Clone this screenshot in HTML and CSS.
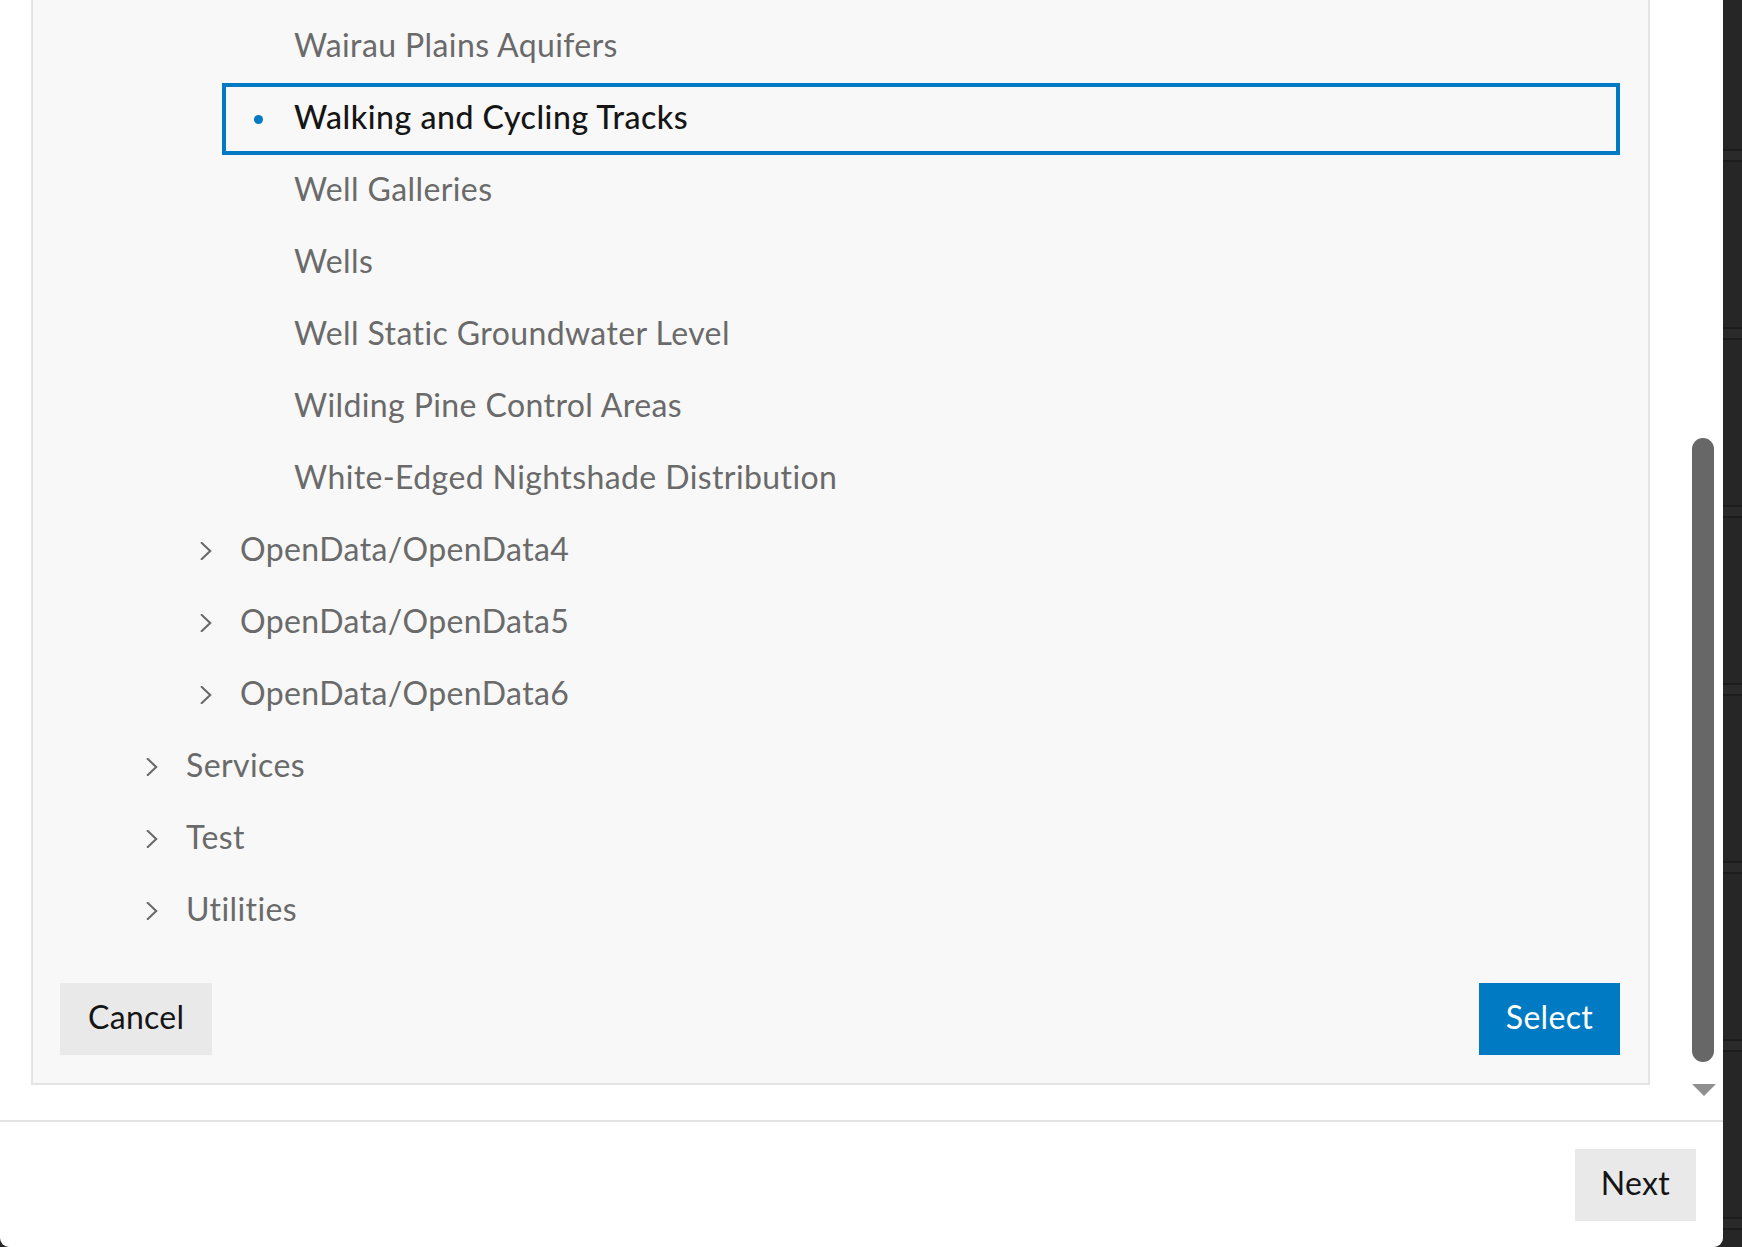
FILE: index.html
```html
<!DOCTYPE html>
<html lang="en">
<head>
<meta charset="utf-8">
<title>Select layer</title>
<link rel="stylesheet" href="styles.css">
</head>
<body>
<div class="backdrop">
  <div class="modal">
    <div class="scroll">
      <div class="scroll-content">
        <div class="panel">
          <ul class="tree">
            <li class="row lvl3"><span class="slot"></span><span class="label">Wairau Plains Aquifers</span></li>
            <li class="row lvl3 selected"><span class="slot"><span class="bullet"></span></span><span class="label">Walking and Cycling Tracks</span></li>
            <li class="row lvl3"><span class="slot"></span><span class="label">Well Galleries</span></li>
            <li class="row lvl3"><span class="slot"></span><span class="label">Wells</span></li>
            <li class="row lvl3"><span class="slot"></span><span class="label">Well Static Groundwater Level</span></li>
            <li class="row lvl3"><span class="slot"></span><span class="label">Wilding Pine Control Areas</span></li>
            <li class="row lvl3"><span class="slot"></span><span class="label">White-Edged Nightshade Distribution</span></li>
            <li class="row lvl2"><span class="slot"><svg class="chev" viewBox="0 0 12 18" width="12" height="18"><path d="M1.8 1 L10.2 9 L1.8 17"/></svg></span><span class="label">OpenData/OpenData4</span></li>
            <li class="row lvl2"><span class="slot"><svg class="chev" viewBox="0 0 12 18" width="12" height="18"><path d="M1.8 1 L10.2 9 L1.8 17"/></svg></span><span class="label">OpenData/OpenData5</span></li>
            <li class="row lvl2"><span class="slot"><svg class="chev" viewBox="0 0 12 18" width="12" height="18"><path d="M1.8 1 L10.2 9 L1.8 17"/></svg></span><span class="label">OpenData/OpenData6</span></li>
            <li class="row lvl1"><span class="slot"><svg class="chev" viewBox="0 0 12 18" width="12" height="18"><path d="M1.8 1 L10.2 9 L1.8 17"/></svg></span><span class="label">Services</span></li>
            <li class="row lvl1"><span class="slot"><svg class="chev" viewBox="0 0 12 18" width="12" height="18"><path d="M1.8 1 L10.2 9 L1.8 17"/></svg></span><span class="label">Test</span></li>
            <li class="row lvl1"><span class="slot"><svg class="chev" viewBox="0 0 12 18" width="12" height="18"><path d="M1.8 1 L10.2 9 L1.8 17"/></svg></span><span class="label">Utilities</span></li>
          </ul>
          <div class="actions">
            <button class="btn btn-neutral">Cancel</button>
            <button class="btn btn-primary">Select</button>
          </div>
        </div>
      </div>
      <div class="scrollbar">
        <div class="thumb"></div>
        <div class="arrow"></div>
      </div>
    </div>
    <div class="footer">
      <button class="btn btn-neutral btn-next">Next</button>
    </div>
  </div>
  <div class="strip"></div>
</div>
</body>
</html>
```
FILE: styles.css
```css
* { box-sizing: border-box; }

html, body {
  margin: 0;
  padding: 0;
  height: 100%;
  overflow: hidden;
}

body {
  background: #262626;
  font-family: "Lato", "Open Sans", sans-serif;
  font-size: 32px;
  color: #6a6a6a;
}

.backdrop {
  display: flex;
  height: 1247px;
}

.modal {
  width: 1723px;
  flex: none;
  height: 1247px;
  background: #ffffff;
  display: flex;
  flex-direction: column;
  border-radius: 0 0 9px 9px;
}

.strip {
  flex: 1;
  background: repeating-linear-gradient(to bottom,
    #262626 0px, #262626 149px,
    #1c1c1c 149px, #1c1c1c 151px,
    #2a2a2a 151px, #2a2a2a 160px,
    #1c1c1c 160px, #1c1c1c 162px,
    #262626 162px, #262626 178px);
}

.scroll {
  height: 1120px;
  display: flex;
}

.scroll-content {
  flex: 1;
  padding-left: 31px;
  display: flex;
  align-items: flex-start;
}

.panel {
  flex: 1;
  background: #f8f8f8;
  border: 2px solid #e4e4e4;
  border-top: none;
  padding: 11px 28px 28px 27px;
}

.tree {
  list-style: none;
  margin: 0;
  padding: 0;
}

.row {
  height: 72px;
  display: flex;
  align-items: center;
  border: 4px solid transparent;
  line-height: 1;
}

.lvl1 { margin-left: 54px; }
.lvl2 { margin-left: 108px; }
.lvl3 { margin-left: 162px; }

.slot {
  width: 68px;
  flex: none;
  display: flex;
  align-items: center;
  padding-left: 28px;
}

.chev {
  display: block;
  fill: none;
  stroke: #6a6a6a;
  stroke-width: 2.1;
  stroke-linecap: square;
}

.bullet {
  display: block;
  width: 9px;
  height: 9px;
  border-radius: 50%;
  background: #007ac2;
}

.label {
  white-space: nowrap;
  letter-spacing: 0.4px;
  padding-bottom: 4px;
}

.selected {
  border-color: #007ac2;
}

.selected .label {
  color: #151515;
  font-weight: 500;
  letter-spacing: 0.55px;
}

.actions {
  display: flex;
  justify-content: space-between;
  margin-top: 36px;
}

.btn {
  height: 72px;
  border: none;
  padding: 0 28px 5px;
  font-family: inherit;
  font-size: 32px;
  letter-spacing: 0.3px;
  line-height: 1;
  cursor: pointer;
}

.btn-neutral {
  background: #e9e9e9;
  color: #151515;
}

.btn-primary {
  background: #007ac2;
  color: #ffffff;
  padding: 0 27px 5px;
}

.scrollbar {
  width: 73px;
  flex: none;
  display: flex;
  flex-direction: column;
  align-items: flex-start;
  padding: 438px 0 0 42px;
}

.thumb {
  width: 22px;
  height: 624px;
  border-radius: 11px;
  background: #676767;
}

.arrow {
  margin-top: 22px;
  width: 0;
  height: 0;
  border-left: 12px solid transparent;
  border-right: 12px solid transparent;
  border-top: 12px solid #8f8f8f;
}

.footer {
  flex: 1;
  border-top: 2px solid #e2e2e2;
  display: flex;
  justify-content: flex-end;
  align-items: flex-start;
  padding: 27px 27px 0 0;
}

.btn-next {
  padding: 0 26px 5px;
}
```
